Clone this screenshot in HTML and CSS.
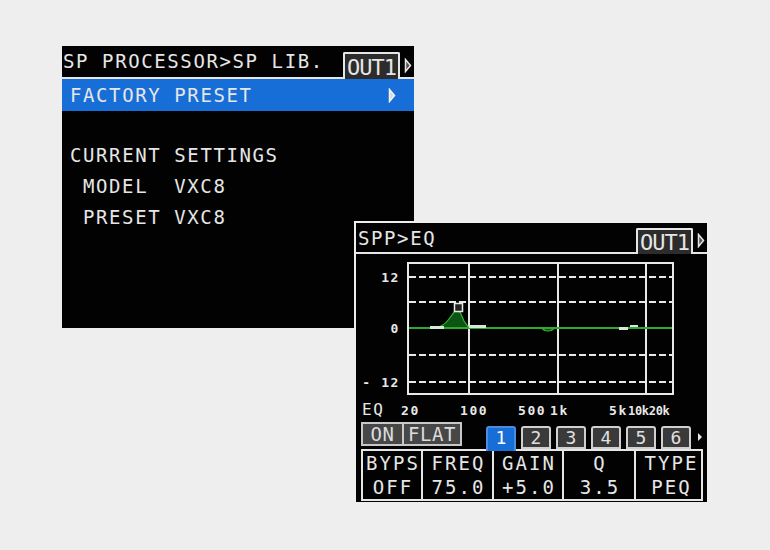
FILE: index.html
```html
<!DOCTYPE html>
<html lang="en">
<head>
  <meta charset="UTF-8" />
  <meta name="viewport" content="width=device-width, initial-scale=1.0" />
  <title>SP Processor</title>
  <link rel="stylesheet" href="styles.css">
</head>
<body>
  <div class="stage">

    <!-- library screen -->
    <div class="screen lib">
      <div class="hdr">
        <span class="title">SP PROCESSOR&gt;SP LIB.</span>
        <span class="tab">OUT1</span>
        <svg class="arr" viewBox="0 0 8 15"><path d="M1.5 1.5 L6.5 7.5 L1.5 13.5 Z" /></svg>
      </div>
      <div class="sel">
        <span>FACTORY PRESET</span>
        <svg class="arr solid" viewBox="0 0 8 15"><path d="M1.5 1.5 L6.5 7.5 L1.5 13.5 Z" /></svg>
      </div>
      <div class="info">
        <div>CURRENT SETTINGS</div>
        <div class="sub">MODEL  VXC8</div>
        <div class="sub">PRESET VXC8</div>
      </div>
    </div>

    <!-- eq screen -->
    <div class="screen eq">
      <div class="hdr">
        <span class="title">SPP&gt;EQ</span>
        <span class="tab">OUT1</span>
        <svg class="arr" viewBox="0 0 8 15"><path d="M1.5 1.5 L6.5 7.5 L1.5 13.5 Z" /></svg>
      </div>

      <svg class="graph" width="351" height="165" viewBox="0 0 351 165">
        <g class="dash">
          <line x1="53" y1="23" x2="316" y2="23" />
          <line x1="53" y1="48" x2="316" y2="48" />
          <line x1="53" y1="101" x2="316" y2="101" />
          <line x1="53" y1="128" x2="316" y2="128" />
        </g>
        <g class="grid">
          <rect x="52" y="9" width="265" height="131" />
          <line x1="113" y1="9" x2="113" y2="140" />
          <line x1="202" y1="9" x2="202" y2="140" />
          <line x1="290" y1="9" x2="290" y2="140" />
        </g>
        <path class="peak" d="M72 74 C84 74 89 71 93 65 L99 57 L104 58 L108 67 L113 74 Z" />
        <path class="peak" d="M185 74 Q192 80 199 74 Z" />
        <line class="zero" x1="53" y1="74" x2="316" y2="74" />
        <g class="bits">
          <rect x="74" y="72" width="14" height="3" />
          <rect x="113" y="71" width="17" height="3" />
          <rect x="263" y="73" width="9" height="3" />
          <rect x="274" y="71" width="8" height="2" />
        </g>
        <rect class="mark" x="98.5" y="49.5" width="8" height="8" />
        <text class="num" x="44" y="28" text-anchor="end">12</text>
        <text class="num" x="44" y="79" text-anchor="end">0</text>
        <text class="num" x="44" y="133" text-anchor="end">- 12</text>
        <text class="lbl" x="6" y="161">EQ</text>
        <text class="num" x="45" y="161">20</text>
        <text class="num" x="104" y="161">100</text>
        <text class="num" x="162" y="161">500</text>
        <text class="num" x="194" y="161">1k</text>
        <text class="num" x="253" y="161">5k</text>
        <text class="num tight" x="272" y="161">10k20k</text>
      </svg>

      <div class="ctrl">
        <div class="toggles">
          <span class="on-btn">ON</span>
          <span>FLAT</span>
        </div>
        <div class="bands">
          <span class="band active">1</span>
          <span class="band">2</span>
          <span class="band">3</span>
          <span class="band">4</span>
          <span class="band">5</span>
          <span class="band">6</span>
        </div>
        <svg class="more" viewBox="0 0 6 10"><path d="M1 1 L5 5 L1 9 Z" /></svg>
      </div>

      <div class="params">
        <span>BYPS</span>
        <span>FREQ</span>
        <span>GAIN</span>
        <span>Q</span>
        <span>TYPE</span>
        <span>OFF</span>
        <span>75.0</span>
        <span>+5.0</span>
        <span>3.5</span>
        <span>PEQ</span>
      </div>
    </div>

  </div>
</body>
</html>
```

FILE: styles.css
```css
* {
  box-sizing: border-box;
}

body {
  margin: 0;
  background: #eeeeee;
}

.stage {
  position: relative;
  width: 770px;
  height: 550px;
}

/* both lcd screens sit on the canvas like windows */
.screen {
  position: absolute;
  background: #020202;
  color: #e6e6e6;
  font-family: "DejaVu Sans Mono", monospace;
  font-size: 19px;
  letter-spacing: 1.6px;
  overflow: hidden;
}

.lib {
  left: 62px;
  top: 46px;
  width: 352px;
  height: 282px;
}

.eq {
  left: 354px;
  top: 221px;
  width: 355px;
  height: 283px;
  border: 2px solid #eeeeee;
}

/* header with the OUT1 tab */
.hdr {
  display: flex;
  align-items: flex-end;
  height: 33px;
  border-bottom: 2px solid #e6e6e6;
}

.eq .hdr {
  height: 31px;
}

.title {
  align-self: flex-start;
  margin-top: 6px;
  margin-left: 1px;
  line-height: 19px;
  flex: 1;
  white-space: pre;
}

.eq .title {
  margin-left: 2px;
}

.tab {
  display: flex;
  align-items: center;
  justify-content: center;
  width: 57px;
  height: 27px;
  margin-bottom: -2px;
  border: 2px solid #e6e6e6;
  border-bottom: none;
  border-radius: 2px 2px 0 0;
  background: #2c2c2c;
  font-size: 22px;
  letter-spacing: -1px;
  line-height: 22px;
  padding-top: 2px;
}

.eq .tab {
  height: 26px;
}

.arr {
  width: 8px;
  height: 15px;
  margin: 0 2px 4px 4px;
}

.arr path {
  fill: #555;
  stroke: #e6e6e6;
  stroke-width: 1.5;
}

.arr.solid {
  margin: 0;
}

.arr.solid path {
  fill: #d8d8d8;
  stroke: #f4f4f4;
}

/* selected row */
.sel {
  display: flex;
  align-items: center;
  justify-content: space-between;
  height: 32px;
  padding: 0 18px 0 8px;
  background: #166ed6;
}

.info {
  padding: 29px 0 0 8px;
  line-height: 31px;
}

.info .sub {
  padding-left: 13px;
  white-space: pre;
}

/* eq graph */
.graph {
  display: block;
}

.grid rect,
.grid line {
  fill: none;
  stroke: #e8e8e8;
  stroke-width: 2;
}

.dash line {
  stroke: #e8e8e8;
  stroke-width: 2;
  stroke-dasharray: 7 3;
}

.zero {
  stroke: #2faa2f;
  stroke-width: 2;
}

.peak {
  fill: #0d5512;
  stroke: #35b535;
  stroke-width: 1.2;
}

.bits rect {
  fill: #d8e8d8;
}

.mark {
  fill: #222;
  stroke: #e8e8e8;
  stroke-width: 1.5;
}

.num {
  font-family: "DejaVu Sans Mono", monospace;
  font-weight: bold;
  font-size: 13px;
  fill: #e8e8e8;
}

.num.tight {
  font-size: 12px;
  letter-spacing: -0.3px;
}

.lbl {
  font-family: "DejaVu Sans Mono", monospace;
  font-size: 16px;
  letter-spacing: 1.5px;
  fill: #e8e8e8;
}

/* buttons and band tabs */
.ctrl {
  display: flex;
  align-items: flex-end;
  height: 27px;
  margin-top: 3px;
  padding-left: 5px;
}

.toggles {
  display: flex;
  height: 24px;
  margin-bottom: 3px;
  border: 2px solid #c8c8c8;
  background: #474747;
  line-height: 20px;
  letter-spacing: 0.5px;
  color: #dcdcdc;
}

.toggles span {
  width: 56px;
  text-align: center;
}

.toggles .on-btn {
  width: 41px;
  border-right: 2px solid #c8c8c8;
}

.bands {
  display: flex;
  gap: 5px;
  margin-left: 24px;
}

.band {
  width: 30px;
  height: 23px;
  border: 2px solid #d0d0d0;
  border-radius: 3px 3px 0 0;
  background: #3a3a3a;
  text-align: center;
  line-height: 20px;
  font-size: 18px;
  letter-spacing: 0;
  color: #e0e0e0;
}

.band.active {
  position: relative;
  z-index: 1;
  height: 25px;
  margin-bottom: -2px;
  border-color: #4a8de0;
  border-bottom: none;
  background: #166ed6;
  color: #fff;
}

.more {
  width: 6px;
  height: 10px;
  margin: 0 0 7px 6px;
}

.more path {
  fill: #e6e6e6;
}

/* parameter table */
.params {
  display: grid;
  grid-template-columns: 58px 71px 70px 72px 71px;
  grid-template-rows: 1fr 1fr;
  width: 342px;
  height: 52px;
  margin-left: 5px;
  border: 2px solid #e6e6e6;
  letter-spacing: 2px;
}

.params span {
  text-align: center;
  line-height: 24px;
  padding-left: 2px;
  border-left: 2px solid #e6e6e6;
}

.params span:nth-child(5n + 1) {
  border-left: none;
}
```
